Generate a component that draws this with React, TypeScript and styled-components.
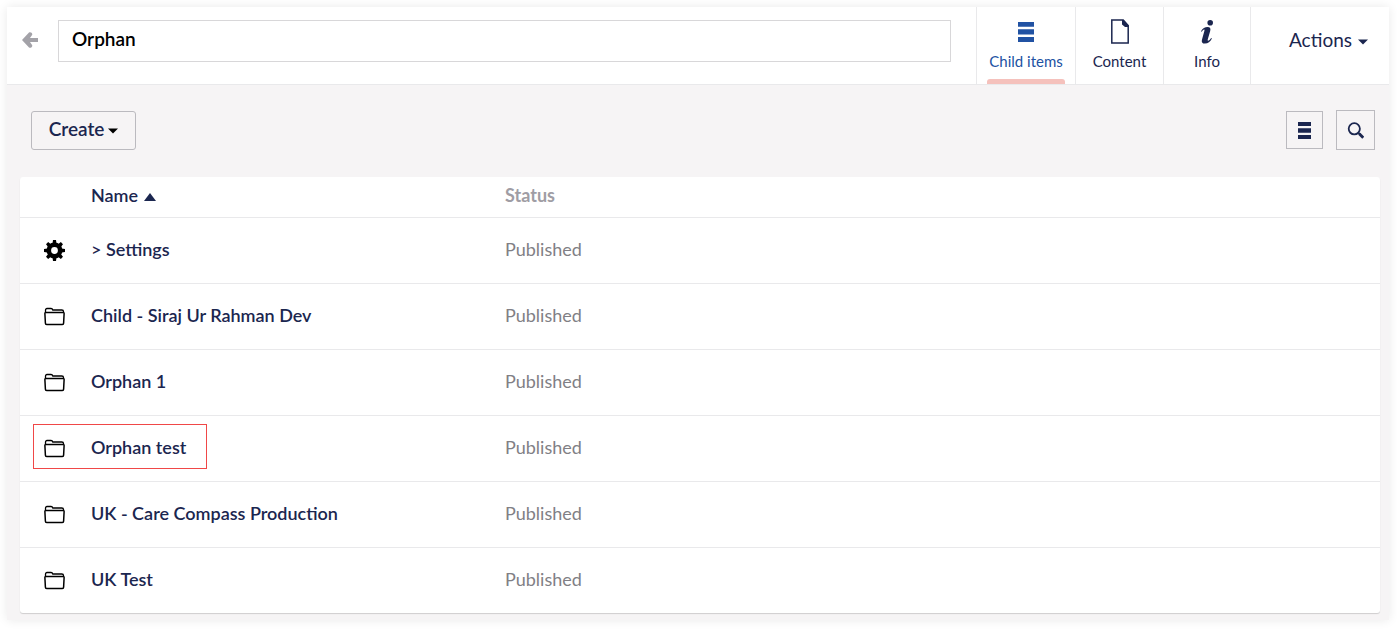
import React from "react";
import styled, { createGlobalStyle, css } from "styled-components";

const navy = "#1b264f";
const line = "#e9e9eb";

const GlobalStyle = createGlobalStyle`
  *, *::before, *::after { box-sizing: border-box; }
  body {
    margin: 0;
    background: #fff;
    color: ${navy};
    font-family: Lato, "Liberation Sans", sans-serif;
    font-size: 18px;
    line-height: 24px;
  }
  button, input { font: inherit; color: inherit; }
  button { cursor: pointer; }
`;

const Page = styled.div`
  padding: 7px 8px 9px 7px;
`;

const Panel = styled.main`
  background: #f6f4f5;
  box-shadow: 0 0 10px rgba(0, 0, 0, 0.09);
`;

const Header = styled.header`
  display: flex;
  height: 78px;
  background: #fff;
  border-bottom: 1px solid ${line};
`;

const BackLink = styled.a`
  display: flex;
  margin: 25px 20px 0 15px;
  height: 16px;
`;

const TitleInput = styled.input`
  flex: 1;
  min-width: 0;
  height: 42px;
  margin: 13px 25px 0 0;
  padding: 0 13px 6px;
  border: 1px solid #d8d7d9;
  border-radius: 0;
  background: #fff;
  color: #000;
  font-size: 19px;
  font-weight: 600;
  outline: none;
`;

const Tabs = styled.nav`
  display: flex;
`;

const Tab = styled.button<{ $active?: boolean; $width: number }>`
  position: relative;
  display: flex;
  flex-direction: column;
  align-items: center;
  width: ${(p) => p.$width}px;
  padding: 12px 0 0;
  gap: 5px;
  border: 0;
  border-left: 1px solid ${line};
  background: none;
  color: ${(p) => (p.$active ? "#2152a3" : navy)};
  font-size: 15px;
  line-height: 24px;
  white-space: nowrap;
  ${(p) =>
    p.$active &&
    css`
      &::after {
        content: "";
        position: absolute;
        left: 10px;
        right: 10px;
        bottom: 0;
        height: 5px;
        border-radius: 3px 3px 0 0;
        background: #f5c1bc;
      }
    `}
`;

const ActionsButton = styled.button`
  display: flex;
  align-items: center;
  justify-content: flex-end;
  gap: 6px;
  width: 139px;
  padding: 0 21px 11px 0;
  border: 0;
  border-left: 1px solid ${line};
  background: none;
  font-size: 19px;
`;

const Toolbar = styled.div`
  display: flex;
  align-items: center;
  gap: 13px;
  padding: 25px 14px 27px 24px;
`;

const CreateButton = styled.button`
  display: flex;
  align-items: center;
  justify-content: center;
  gap: 4px;
  width: 105px;
  height: 39px;
  margin-right: auto;
  padding: 0 0 2px;
  border: 1px solid #bbbabf;
  border-radius: 3px;
  background: none;
  font-size: 19px;
  font-weight: 600;
`;

const IconButton = styled.button<{ $width: number }>`
  display: flex;
  align-items: center;
  justify-content: center;
  width: ${(p) => p.$width}px;
  height: ${(p) => p.$width + 1}px;
  padding: 0;
  border: 1px solid #bbbabf;
  background: none;
`;

const Body = styled.div`
  padding: 0 9px 7px 13px;
`;

const Table = styled.table`
  width: 100%;
  table-layout: fixed;
  border-collapse: separate;
  border-spacing: 0;
  border-radius: 3px;
  background: #fff;
  box-shadow: 0 1px 1px rgba(0, 0, 0, 0.16);
`;

const IconColumn = styled.col`
  width: 71px;
`;

const NameColumn = styled.col`
  width: 414px;
`;

const HeadCell = styled.th`
  height: 41px;
  padding: 0 0 4px;
  border-bottom: 1px solid ${line};
  color: #9f9da4;
  text-align: left;
  font-weight: 700;
`;

const SortButton = styled.button`
  display: flex;
  align-items: center;
  gap: 6px;
  padding: 0;
  border: 0;
  background: none;
  color: ${navy};
  font-weight: 600;

  svg {
    margin-top: 3px;
  }
`;

const Cell = styled.td`
  position: relative;
  height: 66px;
  padding: 0 0 3px;
  border-bottom: 1px solid ${line};
  color: #817f85;
`;

const IconCell = styled(Cell)`
  padding: 0 0 0 24px;
`;

const Row = styled.tr`
  &:last-child > td {
    height: 65px;
    border-bottom: 0;
  }
`;

const Highlight = styled.span`
  position: absolute;
  z-index: 1;
  top: 8px;
  left: 13px;
  width: 174px;
  height: 45px;
  border: 1px solid #f04747;
  pointer-events: none;
`;

const ItemLink = styled.a`
  color: ${navy};
  font-weight: 600;
  text-decoration: none;
`;

const Icon = styled.svg`
  display: block;
  flex: none;
`;

const Caret = ({ color = navy }: { color?: string }) => (
  <Icon width="10" height="9" viewBox="0 0 10 9" aria-hidden="true">
    <path d="M0 3.500h10L5 8.500z" fill={color} />
  </Icon>
);

const BackArrow = () => (
  <Icon width="16" height="16" viewBox="0 0 16 16" aria-hidden="true">
    <path
      d="M0 8 7 .6C8.200-.6 10.800.9 10.200 2.800L8 6h8v4H8l2.200 3.200c.6 1.900-2 3.400-3.200 2.200z"
      fill="#a3a2a8"
    />
  </Icon>
);

const ListIcon = () => (
  <Icon width="16" height="25" viewBox="0 0 16 25" fill="currentColor" aria-hidden="true">
    <path d="M0 3h16v4.800H0zM0 10.300h16v5.200H0zM0 18h16v5H0z" />
  </Icon>
);

const SmallListIcon = () => (
  <Icon width="13" height="17" viewBox="0 0 13 17" fill="currentColor" aria-hidden="true">
    <path d="M0 0h13v4H0zM0 6.300h13v4.400H0zM0 13h13v4H0z" />
  </Icon>
);

const DocumentIcon = () => (
  <Icon width="18" height="25" viewBox="0 0 18 25" aria-hidden="true">
    <path d="M.8 1h11.400l5 5.500V24H.8z" fill="none" stroke="currentColor" strokeWidth="1.500" />
    <path d="M11 1h1.500l5 5.500V8H14l-3-2.500z" fill="currentColor" />
  </Icon>
);

const InfoIcon = () => (
  <Icon width="14" height="25" viewBox="0 0 14 25" fill="currentColor" aria-hidden="true">
    <circle cx="10.200" cy="3.800" r="2.800" />
    <path d="M1 12.200C2.700 9.400 5 8 7.500 8c2.600 0 3.400 1.500 2.700 4l-2.400 8.300c-.3 1-.2 1.400.3 1.400.8 0 1.900-1 3-2.700l.8.600C10.200 22.900 8 24.600 5 24.600c-2.800 0-3.800-1.500-3-4.200l2.300-8.100c.3-1.100.3-1.700-.2-1.700-.7 0-1.400.8-2.300 2.200z" />
  </Icon>
);

const SearchIcon = () => (
  <Icon width="17" height="17" viewBox="0 0 17 17" fill="none" stroke="currentColor" aria-hidden="true">
    <circle cx="7.300" cy="6.800" r="5.600" strokeWidth="1.800" />
    <path d="m11.500 11 1.500 1.500" strokeWidth="2" />
    <path d="m12.300 11.800 4 4" strokeWidth="3" />
  </Icon>
);

const GearIcon = () => (
  <Icon width="21" height="21" viewBox="-10.500 -10.500 21 21" aria-hidden="true">
    <circle r="5.700" fill="none" stroke="#000" strokeWidth="4.600" />
    {[0, 45, 90, 135].map((angle) => (
      <path
        key={angle}
        d="M-2-7-1.500-10.500h3L2-7zM-2 7-1.500 10.500h3L2 7z"
        transform={`rotate(${angle})`}
      />
    ))}
  </Icon>
);

const FolderIcon = () => (
  <Icon width="21" height="19" viewBox="0 0 21 19" fill="none" stroke="#000" aria-hidden="true">
    <path d="M1.500 5.500V3.200C1.500 2 2.200 1.500 3 1.500h4c1 0 1.500.4 1.800 1.500h9c1.200 0 1.700.5 1.700 1.500v1" strokeWidth="1.300" />
    <path d="M2 5.500h17c.8 0 1.200.4 1.100 1.200l-.5 9.600c0 .8-.5 1.200-1.300 1.200H2.700c-.8 0-1.300-.4-1.300-1.200L.9 6.700C.8 5.900 1.200 5.500 2 5.500z" strokeWidth="1.500" />
  </Icon>
);

type Item = { name: string; icon: "gear" | "folder"; highlighted?: boolean };

const items: Item[] = [
  { name: "> Settings", icon: "gear" },
  { name: "Child - Siraj Ur Rahman Dev", icon: "folder" },
  { name: "Orphan 1", icon: "folder" },
  { name: "Orphan test", icon: "folder", highlighted: true },
  { name: "UK - Care Compass Production", icon: "folder" },
  { name: "UK Test", icon: "folder" },
];

export default function App() {
  return (
    <Page>
      <GlobalStyle />
      <Panel>
        <Header>
          <BackLink href="#" aria-label="Back">
            <BackArrow />
          </BackLink>
          <TitleInput aria-label="Name" defaultValue="Orphan" />
          <Tabs>
            <Tab type="button" $active $width={99}>
              <ListIcon />
              Child items
            </Tab>
            <Tab type="button" $width={88}>
              <DocumentIcon />
              Content
            </Tab>
            <Tab type="button" $width={87}>
              <InfoIcon />
              Info
            </Tab>
          </Tabs>
          <ActionsButton type="button">
            Actions
            <Caret />
          </ActionsButton>
        </Header>
        <Toolbar>
          <CreateButton type="button">
            Create
            <Caret color="#000" />
          </CreateButton>
          <IconButton type="button" aria-label="Layout" $width={37}>
            <SmallListIcon />
          </IconButton>
          <IconButton type="button" aria-label="Search" $width={39}>
            <SearchIcon />
          </IconButton>
        </Toolbar>
        <Body>
          <Table>
            <colgroup>
              <IconColumn />
              <NameColumn />
              <col />
            </colgroup>
            <thead>
              <tr>
                <HeadCell />
                <HeadCell scope="col">
                  <SortButton type="button">
                    Name
                    <Icon width="12" height="8" viewBox="0 0 12 8" aria-hidden="true">
                      <path d="M0 8h12L6 0z" fill={navy} />
                    </Icon>
                  </SortButton>
                </HeadCell>
                <HeadCell scope="col">Status</HeadCell>
              </tr>
            </thead>
            <tbody>
              {items.map((item) => (
                <Row key={item.name}>
                  <IconCell>
                    {item.icon === "gear" ? <GearIcon /> : <FolderIcon />}
                    {item.highlighted && <Highlight />}
                  </IconCell>
                  <Cell>
                    <ItemLink href="#">{item.name}</ItemLink>
                  </Cell>
                  <Cell>Published</Cell>
                </Row>
              ))}
            </tbody>
          </Table>
        </Body>
      </Panel>
    </Page>
  );
}
